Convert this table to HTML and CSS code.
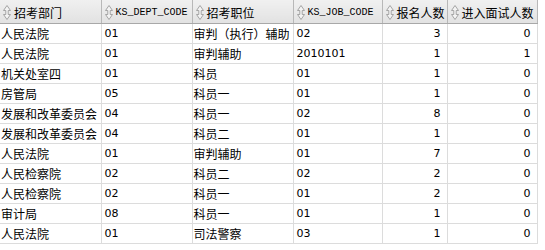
FILE: index.html
```html
<!DOCTYPE html>
<html>
<head>
<meta charset="utf-8">
<link rel="stylesheet" href="styles.css">
</head>
<body>
<table class="grid">
<colgroup>
<col class="c1"><col class="c2"><col class="c3"><col class="c4"><col class="c5"><col class="c6">
</colgroup>
<thead>
<tr>
<th><svg class="sort" viewBox="0 0 8 15"><path d="M4 0.5 L7.5 5.5 L5.2 5.5 L5.2 9.5 L7.5 9.5 L4 14.5 L0.5 9.5 L2.8 9.5 L2.8 5.5 L0.5 5.5 Z"/></svg><span class="cn">招考部门</span></th>
<th><svg class="sort" viewBox="0 0 8 15"><path d="M4 0.5 L7.5 5.5 L5.2 5.5 L5.2 9.5 L7.5 9.5 L4 14.5 L0.5 9.5 L2.8 9.5 L2.8 5.5 L0.5 5.5 Z"/></svg><span class="code">KS_DEPT_CODE</span></th>
<th><svg class="sort" viewBox="0 0 8 15"><path d="M4 0.5 L7.5 5.5 L5.2 5.5 L5.2 9.5 L7.5 9.5 L4 14.5 L0.5 9.5 L2.8 9.5 L2.8 5.5 L0.5 5.5 Z"/></svg><span class="cn">招考职位</span></th>
<th><svg class="sort" viewBox="0 0 8 15"><path d="M4 0.5 L7.5 5.5 L5.2 5.5 L5.2 9.5 L7.5 9.5 L4 14.5 L0.5 9.5 L2.8 9.5 L2.8 5.5 L0.5 5.5 Z"/></svg><span class="code">KS_JOB_CODE</span></th>
<th><svg class="sort" viewBox="0 0 8 15"><path d="M4 0.5 L7.5 5.5 L5.2 5.5 L5.2 9.5 L7.5 9.5 L4 14.5 L0.5 9.5 L2.8 9.5 L2.8 5.5 L0.5 5.5 Z"/></svg><span class="cn">报名人数</span></th>
<th><svg class="sort" viewBox="0 0 8 15"><path d="M4 0.5 L7.5 5.5 L5.2 5.5 L5.2 9.5 L7.5 9.5 L4 14.5 L0.5 9.5 L2.8 9.5 L2.8 5.5 L0.5 5.5 Z"/></svg><span class="cn">进入面试人数</span></th>
</tr>
</thead>
<tbody>
<tr><td>人民法院</td><td class="d">01</td><td>审判（执行）辅助</td><td class="d">02</td><td class="n">3</td><td class="n">0</td></tr>
<tr><td>人民法院</td><td class="d">01</td><td>审判辅助</td><td class="d">2010101</td><td class="n">1</td><td class="n">1</td></tr>
<tr><td>机关处室四</td><td class="d">01</td><td>科员</td><td class="d">01</td><td class="n">1</td><td class="n">0</td></tr>
<tr><td>房管局</td><td class="d">05</td><td>科员一</td><td class="d">01</td><td class="n">1</td><td class="n">0</td></tr>
<tr><td>发展和改革委员会</td><td class="d">04</td><td>科员一</td><td class="d">02</td><td class="n">8</td><td class="n">0</td></tr>
<tr><td>发展和改革委员会</td><td class="d">04</td><td>科员二</td><td class="d">01</td><td class="n">1</td><td class="n">0</td></tr>
<tr><td>人民法院</td><td class="d">01</td><td>审判辅助</td><td class="d">01</td><td class="n">7</td><td class="n">0</td></tr>
<tr><td>人民检察院</td><td class="d">02</td><td>科员二</td><td class="d">02</td><td class="n">2</td><td class="n">0</td></tr>
<tr><td>人民检察院</td><td class="d">02</td><td>科员一</td><td class="d">01</td><td class="n">2</td><td class="n">0</td></tr>
<tr><td>审计局</td><td class="d">08</td><td>科员一</td><td class="d">01</td><td class="n">1</td><td class="n">0</td></tr>
<tr><td>人民法院</td><td class="d">01</td><td>司法警察</td><td class="d">03</td><td class="n">1</td><td class="n">0</td></tr>
</tbody>
</table>
</body>
</html>
```
FILE: styles.css
```css
html, body {
  margin: 0;
  padding: 0;
  background: #ffffff;
}
.grid {
  border-collapse: collapse;
  table-layout: fixed;
  width: 537px;
  font-family: "Noto Sans CJK SC", "DejaVu Sans", sans-serif;
  font-size: 12px;
  color: #000;
}
.c1 { width: 101px; }
.c2 { width: 91px; }
.c3 { width: 101px; }
.c4 { width: 89px; }
.c5 { width: 65px; }
.c6 { width: 90px; }
.grid th {
  height: 21px;
  padding: 0 0 0 3px;
  text-align: left;
  font-weight: normal;
  background: linear-gradient(#f0f0f0, #e2e2e2);
  border-right: 1px solid #b8b8b8;
  border-bottom: 1px solid #a8a8a8;
  white-space: nowrap;
  overflow: hidden;
  vertical-align: middle;
  line-height: 21px;
}
.grid th > * { vertical-align: middle; }
.sort {
  display: inline-block;
  width: 8px;
  height: 15px;
  margin-right: 3px;
  fill: #f4f4f4;
  stroke: #a4a4a4;
  stroke-width: 1;
}
.cn { font-size: 12px; }
.code {
  font-family: "Liberation Mono", "DejaVu Sans Mono", monospace;
  font-size: 10px;
}
.grid td {
  height: 19px;
  padding: 0 2px 0 1px;
  border-right: 1px solid #dcdcdc;
  border-bottom: 1px solid #dcdcdc;
  white-space: nowrap;
  overflow: hidden;
  line-height: 19px;
  font-size: 12px;
}
.grid td.d {
  padding-left: 3px;
  font-family: "DejaVu Sans", sans-serif;
  font-size: 11px;
}
.grid td.n {
  text-align: right;
  padding-right: 6px;
  font-family: "DejaVu Sans", sans-serif;
  font-size: 11px;
}
```
